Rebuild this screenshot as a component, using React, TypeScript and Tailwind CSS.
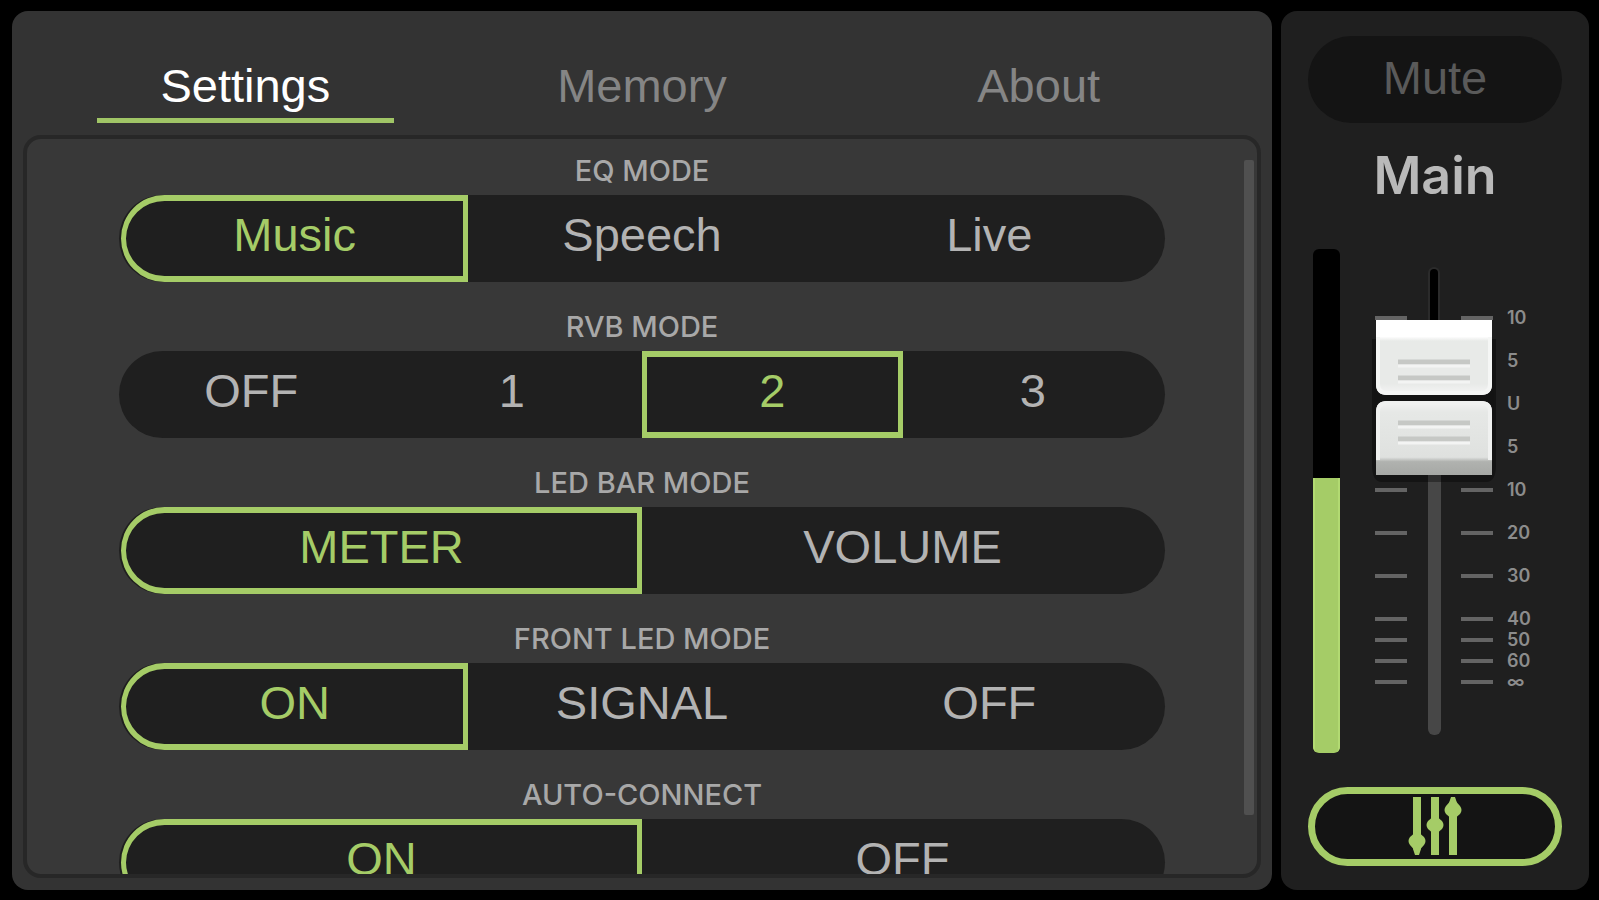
import React, { useState } from 'react';
import clsx from 'clsx';

const TABS = ['Settings', 'Memory', 'About'];

interface ModeGroup {
  label: string;
  options: string[];
  initial: number;
}

const GROUPS: ModeGroup[] = [
  { label: 'EQ MODE', options: ['Music', 'Speech', 'Live'], initial: 0 },
  { label: 'RVB MODE', options: ['OFF', '1', '2', '3'], initial: 2 },
  { label: 'LED BAR MODE', options: ['METER', 'VOLUME'], initial: 0 },
  { label: 'FRONT LED MODE', options: ['ON', 'SIGNAL', 'OFF'], initial: 0 },
  { label: 'AUTO-CONNECT', options: ['ON', 'OFF'], initial: 0 },
];

// The scale gets tighter below 40 dB
const SCALE = [
  { label: '10', tick: true },
  { label: '5', tick: false },
  { label: 'U', tick: false },
  { label: '5', tick: false },
  { label: '10', tick: true },
  { label: '20', tick: true },
  { label: '30', tick: true },
  { label: '40', tick: true, tight: true },
  { label: '50', tick: true, tight: true },
  { label: '60', tick: true, tight: true },
  { label: '∞', tick: true, tight: true },
];

const Segmented: React.FC<{ group: ModeGroup }> = ({ group }) => {
  const [active, setActive] = useState(group.initial);
  const last = group.options.length - 1;

  return (
    <section className="mb-8 shrink-0">
      <h2 className="mb-3 text-center font-['Inter',sans-serif] text-[29px] font-medium leading-[25px] text-[#a8a8a8]">
        {group.label}
      </h2>
      <div role="group" aria-label={group.label} className="flex h-[87px] rounded-full bg-[#1f1f1f] px-0.5">
        {group.options.map((option, i) => (
          <button
            key={option}
            aria-pressed={i === active}
            onClick={() => setActive(i)}
            className={clsx(
              'flex flex-1 items-center justify-center border-x-[5px] border-y-[6px] pb-2 text-[47px] leading-none',
              i === active ? 'border-[#a5cc67] text-[#a5cc67]' : 'border-transparent text-[#b3b3b3]',
              i === 0 && 'rounded-l-full',
              i === last && 'rounded-r-full'
            )}
          >
            {option}
          </button>
        ))}
      </div>
    </section>
  );
};

const FaderCap = () => (
  <svg viewBox="0 0 128 170" className="w-32" aria-hidden="true">
    <defs>
      <linearGradient id="capTop" x1="0" y1="0" x2="0" y2="1">
        <stop offset="0" stopColor="#fff" />
        <stop offset="0.22" stopColor="#fff" />
        <stop offset="0.28" stopColor="#e8eae8" />
        <stop offset="0.85" stopColor="#e8eae8" />
        <stop offset="1" stopColor="#f6f6f6" />
      </linearGradient>
      <linearGradient id="capBottom" x1="0" y1="0" x2="0" y2="1">
        <stop offset="0" stopColor="#f4f4f4" />
        <stop offset="0.15" stopColor="#e6e8e6" />
        <stop offset="0.76" stopColor="#dfe1df" />
        <stop offset="0.82" stopColor="#b0b2af" />
        <stop offset="1" stopColor="#a6a8a5" />
      </linearGradient>
    </defs>
    <path d="M2 24 V150 Q2 167 12 167 H116 Q126 167 126 150 V24 Z" fill="#000" opacity="0.35" />
    <path d="M4 60 H124 V100 H4 Z" fill="#131313" />
    <path d="M6 5 H122 V69 Q122 80 111 80 H17 Q6 80 6 69 Z" fill="url(#capTop)" />
    <path d="M8 22 V69 Q8 78 17 78 H111 Q120 78 120 69 V22" fill="none" stroke="#f5f6f5" strokeWidth="4" />
    <path d="M17 86 H111 Q122 86 122 97 V160 H6 V97 Q6 86 17 86 Z" fill="url(#capBottom)" />
    <path d="M8 145 V97 Q8 88 17 88 H111 Q120 88 120 97 V145" fill="none" stroke="#f0f1f0" strokeWidth="4" />
    <path d="M28 47 H100 M28 63 H100 M28 108 H100 M28 124 H100" stroke="#c6c8c5" strokeWidth="5" />
    <path d="M28 51 H100 M28 67 H100 M28 112 H100 M28 128 H100" stroke="#f3f4f3" strokeWidth="3" />
  </svg>
);

const MixerIcon = () => (
  <svg viewBox="0 0 56 58" className="mb-0.5 h-[58px] w-14" fill="#a5cc67" aria-hidden="true">
    <path d="M6 0 H14 V52 L12 58 H8 L6 52 Z" />
    <rect x="24" y="0" width="8" height="58" />
    <path d="M42 6 L44 0 H48 L50 6 V58 H42 Z" />
    <path d="M10 34 L17 40 Q20 44 17 48 L10 56 L3 48 Q0 44 3 40 Z" />
    <path d="M28 18 L35 24 Q38 28 35 32 L28 38 L21 32 Q18 28 21 24 Z" />
    <path d="M46 1 L53 9 Q56 13 53 17 L46 23 L39 17 Q36 13 39 9 Z" />
  </svg>
);

const MainFader = () => {
  const [level, setLevel] = useState(77);

  return (
    <div className="relative flex w-[162px] flex-col pt-[58px]">
      <div className="absolute left-[53px] top-[18px] h-[80px] w-3 rounded-t-md border-2 border-b-0 border-[#2b2b2b] bg-black" />
      <div className="absolute bottom-[18px] left-[53px] top-[200px] w-[13px] rounded-b-md bg-[#474747]" />
      {SCALE.map((mark, i) => (
        <div key={i} className={clsx('flex h-[21px] shrink-0 items-center', !mark.tight && 'mb-[22px]')}>
          <span className={clsx('h-1 w-8', mark.tick && 'bg-[#646464]')} />
          <span className={clsx('ml-[54px] h-1 w-8', mark.tick && 'bg-[#646464]')} />
          <span className="ml-[14px] font-['Inter',sans-serif] text-lg font-semibold leading-[21px] text-[#8c8c8c]">
            {mark.label}
          </span>
        </div>
      ))}
      <div className="absolute left-[-5px] top-[66px]">
        <FaderCap />
      </div>
      <input
        type="range"
        aria-label="Main level"
        value={level}
        onChange={(e) => setLevel(Number(e.target.value))}
        className="absolute inset-y-0 left-0 w-[118px] cursor-pointer opacity-0 [direction:rtl] [writing-mode:vertical-lr]"
      />
    </div>
  );
};

const App: React.FC = () => {
  const [tab, setTab] = useState(0);
  const [muted, setMuted] = useState(false);

  return (
    <div className="flex h-screen gap-[9px] overflow-hidden bg-black pb-[10px] pl-3 pr-[10px] pt-[11px] font-['Liberation_Sans',sans-serif]">
      <main className="flex min-w-0 flex-1 flex-col rounded-2xl bg-[#333333] px-[11px] pb-3 pt-[42px]">
        <nav className="mb-3 flex px-6">
          {TABS.map((name, i) => (
            <button
              key={name}
              onClick={() => setTab(i)}
              className={clsx('flex flex-1 justify-center text-[47px] leading-[65px]', i === tab ? 'text-white' : 'text-[#858585]')}
            >
              <span className={clsx('w-3/4 border-b-[5px]', i === tab ? 'border-[#a0c566]' : 'border-transparent')}>
                {name}
              </span>
            </button>
          ))}
        </nav>

        <div className="relative flex min-h-0 flex-1 flex-col overflow-hidden rounded-[18px] border-4 border-[#272727] bg-[#383838] px-[92px] pt-[19px]">
          {GROUPS.map((group) => (
            <Segmented key={group.label} group={group} />
          ))}
          <div className="absolute bottom-[59px] right-[3px] top-[21px] w-[10px] rounded-xs bg-[#505050]" />
        </div>
      </main>

      <aside className="flex w-[308px] shrink-0 flex-col rounded-2xl bg-[#1f1f1f] px-[27px] pb-6 pt-[25px]">
        <button
          aria-pressed={muted}
          onClick={() => setMuted(!muted)}
          className="h-[87px] shrink-0 rounded-full bg-[#141414] pb-1 text-[47px] leading-none text-[#5a5a5a]"
        >
          Mute
        </button>
        <h1 className="mb-[43px] mt-[23px] text-center font-['Inter',sans-serif] text-[52px] font-semibold leading-[60px] text-[#b9b9b9]">
          Main
        </h1>
        <div className="flex min-h-0 flex-1 gap-[35px] pl-[5px]">
          <div className="flex w-[27px] flex-col overflow-hidden rounded-md bg-black">
            <div className="mt-auto h-[275px] border-x-2 border-[#b2da72] bg-[#a5cc67]" />
          </div>
          <MainFader />
        </div>
        <button
          aria-label="Mixer"
          className="mt-[34px] flex h-[79px] shrink-0 items-center justify-center rounded-full border-[7px] border-[#a5cc67] bg-[#141414]"
        >
          <MixerIcon />
        </button>
      </aside>
    </div>
  );
};

export default App;
